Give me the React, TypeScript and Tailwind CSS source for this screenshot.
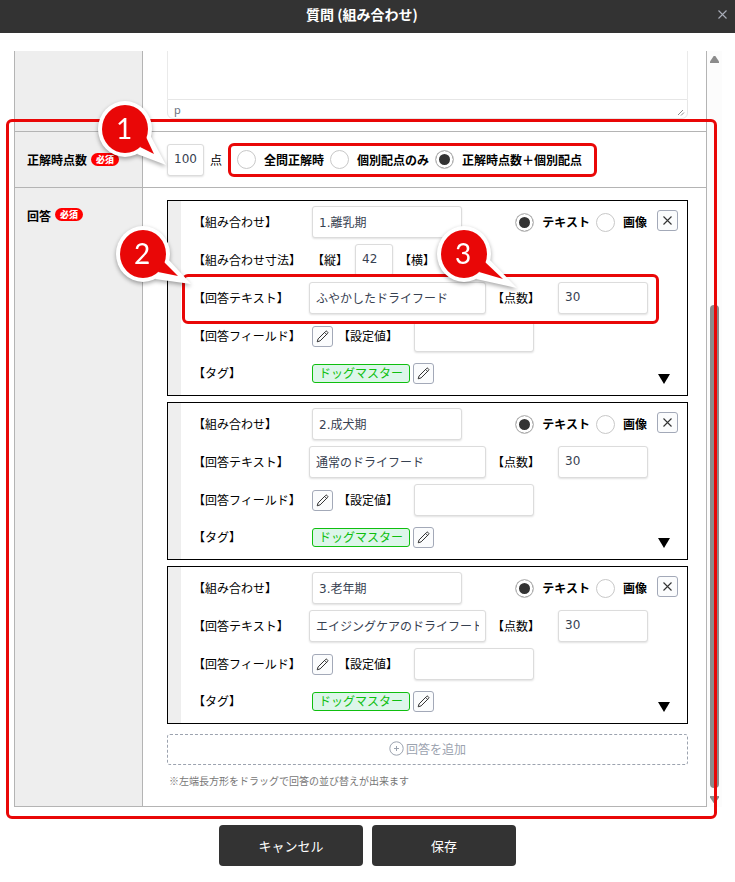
import type { ReactNode } from "react";
import { clsx } from "clsx";

interface Answer {
  id: number;
  combination: string;
  text: string;
  points: string;
  height?: string;
  marked?: boolean;
}

const ANSWERS: Answer[] = [
  { id: 1, combination: "1.離乳期", text: "ふやかしたドライフード", points: "30", height: "42", marked: true },
  { id: 2, combination: "2.成犬期", text: "通常のドライフード", points: "30" },
  { id: 3, combination: "3.老年期", text: "エイジングケアのドライフード", points: "30" },
];

const SCORING = ["全問正解時", "個別配点のみ", "正解時点数＋個別配点"];

const INPUT =
  "h-8 min-w-0 rounded-[3px] border border-[#dcdcdc] bg-white px-1.5 pb-0.5 font-['DejaVu_Sans','Noto_Sans_CJK_JP',sans-serif] text-[12px] text-[#374151] shadow-[0_1px_2px_rgba(0,0,0,0.12)] outline-none";

const RADIO =
  "size-[19px] shrink-0 appearance-none rounded-full border border-[#c8c8c8] bg-white checked:bg-[#333] checked:shadow-[inset_0_0_0_3px_#fff]";

const ICON_BUTTON =
  "flex size-[21px] shrink-0 items-center justify-center rounded-[3px] border border-[#a3a9b8] bg-[#fbfcfd]";

function Required() {
  return (
    <span className="flex h-[13px] w-7 items-center justify-center rounded-full bg-[#f00] text-[9px] font-black leading-none text-white">
      必須
    </span>
  );
}

interface CalloutProps {
  label: string;
  tip: [number, number];
  inner: [number, number];
  className: string;
}

function Callout({ label, tip, inner, className }: CalloutProps) {
  return (
    <svg
      width="96"
      height="84"
      viewBox="0 0 96 84"
      aria-hidden="true"
      className={clsx("pointer-events-none absolute z-20 drop-shadow-[0_2px_2px_rgba(0,0,0,0.35)]", className)}
    >
      <ellipse cx="34" cy="34" rx="27" ry="28" fill="#fff" />
      <polygon points={`58,38 ${tip[0]},${tip[1]} 46,59`} fill="#fff" />
      <ellipse cx="34" cy="34" rx="23" ry="24" fill="#e90707" />
      <polygon points={`55,42 ${inner[0]},${inner[1]} 49,52`} fill="#e90707" />
      <text x="33" y="44" textAnchor="middle" fontSize="28" fill="#fff" className="font-['Lato',sans-serif]">
        {label}
      </text>
    </svg>
  );
}

function PencilIcon() {
  return (
    <svg width="13" height="13" viewBox="0 0 13 13" fill="none" stroke="#333" strokeWidth="1" strokeLinejoin="round">
      <path d="M1.2 11.8 2.1 8.9 9.6 1.4a1 1 0 0 1 1.4 0l.6.6a1 1 0 0 1 0 1.400L4.1 10.900Z" />
      <path d="M8.600 2.400l2 2" />
    </svg>
  );
}

function CrossIcon() {
  return (
    <svg width="9" height="9" viewBox="0 0 9 9" fill="none" stroke="currentColor" strokeWidth="1.1">
      <path d="M.5.5l8 8M8.5.5l-8 8" />
    </svg>
  );
}

function FormRow({ label, required, className, children }: { label?: string; required?: boolean; className?: string; children: ReactNode }) {
  return (
    <div className="flex border-b border-[#b4b4b4]">
      <div className="flex w-32 shrink-0 items-stretch border-r border-[#b4b4b4] bg-[#eee] pl-3">
        <div className={clsx("flex w-full gap-1", className)}>
          {label && <span className="font-bold">{label}</span>}
          {required && <Required />}
        </div>
      </div>
      <div className="min-w-0 flex-1 pl-6 pr-[18px]">{children}</div>
    </div>
  );
}

function AnswerCard({ answer }: { answer: Answer }) {
  const { id, combination, text, points, height, marked } = answer;

  return (
    <div className="flex border border-black bg-white">
      <div className="w-[13px] shrink-0 cursor-move bg-[#eee]" />
      <div className="flex min-w-0 flex-1 flex-col gap-1.5 py-[5px] pl-3 pr-[9px]">
        <div className="flex h-8 items-center">
          <label htmlFor={`comb-${id}`} className="w-[119px] shrink-0">【組み合わせ】</label>
          <input id={`comb-${id}`} defaultValue={combination} className={clsx(INPUT, "w-[150px]")} />
          <div className="ml-auto flex shrink-0 items-center font-bold">
            <label className="flex items-center gap-2">
              <input type="radio" name={`kind-${id}`} defaultChecked className={RADIO} />
              テキスト
            </label>
            <label className="ml-1.5 flex items-center gap-2">
              <input type="radio" name={`kind-${id}`} className={RADIO} />
              画像
            </label>
          </div>
          <button type="button" aria-label="削除" className={clsx(ICON_BUTTON, "ml-2.5 mt-1 self-start text-[#333]")}>
            <CrossIcon />
          </button>
        </div>

        {height && (
          <div className="flex h-8 items-center">
            <span className="w-[119px] shrink-0">【組み合わせ寸法】</span>
            <label htmlFor={`height-${id}`} className="w-[43px] shrink-0">【縦】</label>
            <input id={`height-${id}`} defaultValue={height} className={clsx(INPUT, "w-[38px]")} />
            <span className="ml-1.5">【横】</span>
          </div>
        )}

        <div className={clsx("flex h-8 items-center", marked && "relative z-10")}>
          {marked && (
            <>
              <div className="absolute -bottom-2.5 -left-[11px] -top-2 right-[19px] -z-10 rounded-md border-3 border-[#e90707] bg-white" />
              <Callout label="2" tip={[82, 64]} inner={[69, 56]} className="-left-[84px] -top-[62px]" />
              <Callout label="3" tip={[87, 68]} inner={[73, 59]} className="-top-[62px] left-[237px]" />
            </>
          )}
          <label htmlFor={`text-${id}`} className="w-[116px] shrink-0">【回答テキスト】</label>
          <input id={`text-${id}`} defaultValue={text} className={clsx(INPUT, "w-[177px]")} />
          <label htmlFor={`points-${id}`} className="ml-1.5 w-[66px] shrink-0">【点数】</label>
          <input id={`points-${id}`} defaultValue={points} className={clsx(INPUT, "w-[90px]")} />
        </div>

        <div className="flex h-8 items-center">
          <span className="w-[119px] shrink-0">【回答フィールド】</span>
          <button type="button" aria-label="回答フィールドを編集" className={ICON_BUTTON}>
            <PencilIcon />
          </button>
          <label htmlFor={`value-${id}`} className="ml-[5px] w-[76px] shrink-0">【設定値】</label>
          <input id={`value-${id}`} className={clsx(INPUT, "w-[120px]")} />
        </div>

        <div className="flex h-8 items-center pb-0.5">
          <span className="w-[119px] shrink-0">【タグ】</span>
          <span className="flex h-[19px] w-[98px] shrink-0 items-center justify-center rounded-[3px] border border-[#0fbf0f] bg-[#ddf6ea] text-[#0fbf0f]">
            ドッグマスター
          </span>
          <button type="button" aria-label="タグを編集" className={clsx(ICON_BUTTON, "ml-[3px]")}>
            <PencilIcon />
          </button>
          <button type="button" aria-label="下へ移動" className="mb-1 ml-auto mr-2 self-end">
            <svg width="12" height="10" viewBox="0 0 12 10" className="block">
              <path d="M0 0h12L6 10Z" />
            </svg>
          </button>
        </div>
      </div>
    </div>
  );
}

function ScrollRail() {
  return (
    <div className="flex w-[15px] shrink-0 flex-col items-center bg-[#fcfcfc]" aria-hidden="true">
      <svg width="9" height="16" viewBox="0 0 9 16" fill="#8b8b8b">
        <path d="M3.7 5h1.6L9 10.5V12H0v-1.5Z" />
      </svg>
      <div className="flex-[33]" />
      <div className="mb-[3px] w-[9px] flex-[67] rounded-[4px] bg-[#8b8b8b]" />
      <svg width="9" height="16" viewBox="0 0 9 16" fill="#8b8b8b">
        <path d="M3.7 12h1.6L9 6.500V5H0v1.500Z" />
      </svg>
    </div>
  );
}

export default function App() {
  return (
    <div className="min-h-screen bg-white font-['Noto_Sans_CJK_JP',sans-serif] text-[12px] leading-4 text-black">
      <header className="flex h-[33px] items-center bg-[#333] pb-1 pl-2 pr-[7px]">
        <h1 className="flex-1 pb-0.5 text-center text-[14px] font-bold text-white">質問 (組み合わせ)</h1>
        <button type="button" aria-label="閉じる" className="flex w-3 justify-center text-[#a9adb8]">
          <CrossIcon />
        </button>
      </header>

      <main className="flex pl-3.5 pr-[13px] pt-[18px]">
        <div className="min-w-0 flex-1 border-x border-[#b4b4b4]">
          <FormRow>
            <div className="pb-3">
              <textarea
                aria-label="質問文"
                className="block h-12 w-full resize-none border-x border-[#eaeaea] bg-white px-2 outline-none"
              />
              <div className="flex h-5 items-center justify-between rounded-b-md border border-[#e6e6e6] px-1.5 pt-0.5">
                <span className="font-['Noto_Sans',sans-serif] text-[11px] text-[#6b7280]">p</span>
                <svg width="8" height="8" viewBox="0 0 8 8" stroke="#8a8a8a" strokeWidth="1" className="-mr-1 mt-1">
                  <path d="M1 7l5-5M4 7.500l3-3" />
                </svg>
              </div>
            </div>
          </FormRow>

          <div className="relative">
            <div className="pointer-events-none absolute -bottom-3 -left-[9px] -right-[11px] -top-[13px] z-10 rounded-md border-3 border-[#e90707]" />
            <Callout label="1" tip={[75, 70]} inner={[63, 59]} className="-top-[37px] left-[76px]" />

            <FormRow label="正解時点数" required className="items-center">
              <div className="flex h-[55px] items-center">
                <input id="score" defaultValue="100" className={clsx(INPUT, "w-[37px]")} />
                <label htmlFor="score" className="ml-1.5 shrink-0">点</label>
                <div className="ml-1.5 flex h-[34px] shrink-0 items-center gap-1.5 rounded-md border-3 border-[#e90707] pl-1.5 pr-3 font-bold">
                  {SCORING.map((name, i) => (
                    <label key={name} className="flex items-center gap-2">
                      <input type="radio" name="scoring" defaultChecked={i === 2} className={RADIO} />
                      {name}
                    </label>
                  ))}
                </div>
              </div>
            </FormRow>

            <FormRow label="回答" required className="items-start pt-5">
              <div className="pb-[17px] pt-3">
                <div className="flex flex-col gap-1.5">
                  {ANSWERS.map((answer) => (
                    <AnswerCard key={answer.id} answer={answer} />
                  ))}
                </div>
                <button
                  type="button"
                  className="mt-2.5 flex h-[31px] w-full items-center justify-center gap-0.5 rounded-[3px] border border-dashed border-[#9ca3af] pb-0.5 text-[#9ca3af]"
                >
                  <svg width="15" height="15" viewBox="0 0 15 15" fill="none" stroke="currentColor">
                    <circle cx="7.5" cy="7.5" r="6.7" />
                    <path d="M7.5 5v5M5 7.5h5" />
                  </svg>
                  回答を追加
                </button>
                <p className="mt-2 pl-0.5 text-[10px] text-[#777]">
                  ※左端長方形をドラッグで回答の並び替えが出来ます
                </p>
              </div>
            </FormRow>
          </div>
        </div>
        <ScrollRail />
      </main>

      <footer className="flex justify-center gap-[9px] pb-4 pt-[18px] text-[13px] text-white">
        <button type="button" className="h-[41px] w-36 rounded-[4px] bg-[#333]">キャンセル</button>
        <button type="button" className="h-[41px] w-36 rounded-[4px] bg-[#333]">保存</button>
      </footer>
    </div>
  );
}
